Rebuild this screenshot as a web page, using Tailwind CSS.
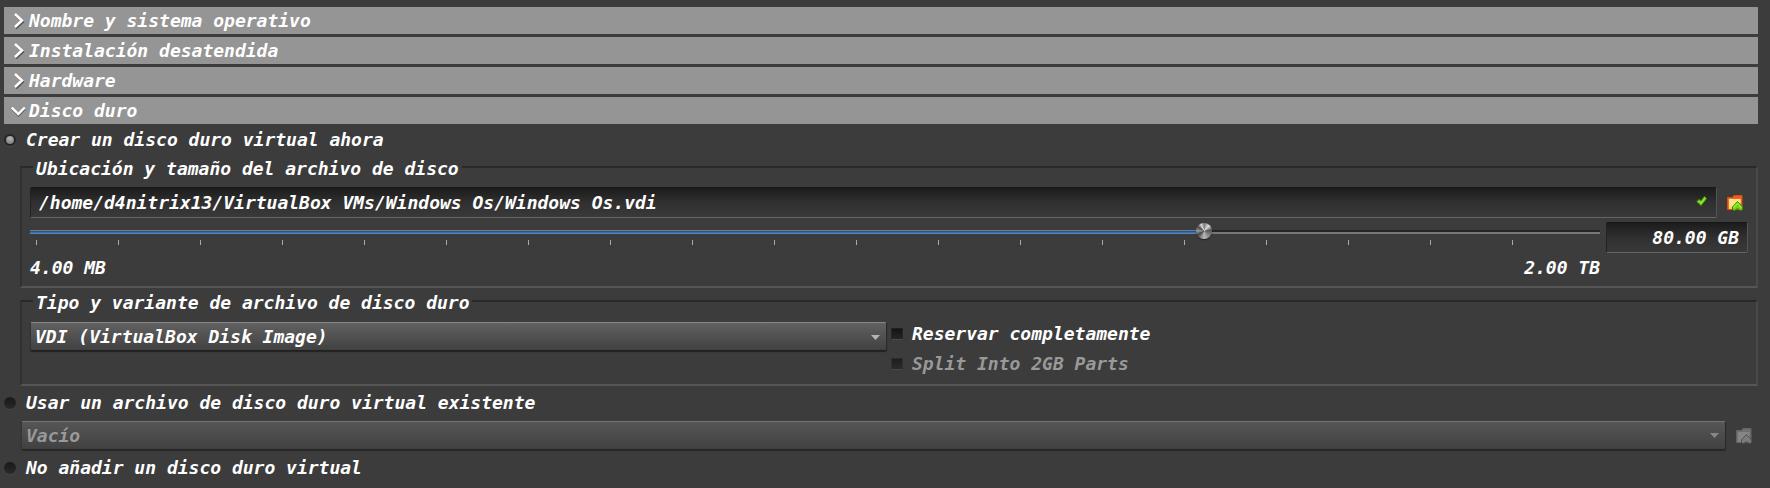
<!DOCTYPE html>
<html lang="es">
<head>
<meta charset="utf-8">
<meta name="viewport" content="width=device-width, initial-scale=1">
<title>Crear máquina virtual</title>
<script src="https://cdn.jsdelivr.net/npm/@tailwindcss/browser@4"></script>
</head>
<body class="min-h-screen bg-[#3c3c3c] pt-[7px] pr-3 pl-1 font-['DejaVu_Sans_Mono',monospace] text-[18px] leading-6 font-bold text-white italic">
<main>
  <nav class="flex flex-col gap-[3px]" aria-label="Secciones">
    <button type="button" aria-expanded="false" class="flex h-[27px] w-full items-center bg-[#959595] pl-[7px] text-left">
      <svg class="mr-[2px] h-4 w-4 shrink-0" viewBox="0 0 16 16" fill="none" aria-hidden="true"><path d="M5 2.5 12 9l-7 6.5" stroke="#555" stroke-width="2"/><path d="M4 1 11 7.5l-7 6.5" stroke="#fff" stroke-width="2.400"/></svg>Nombre y sistema operativo
    </button>
    <button type="button" aria-expanded="false" class="flex h-[27px] w-full items-center bg-[#959595] pl-[7px] text-left">
      <svg class="mr-[2px] h-4 w-4 shrink-0" viewBox="0 0 16 16" fill="none" aria-hidden="true"><path d="M5 2.5 12 9l-7 6.5" stroke="#555" stroke-width="2"/><path d="M4 1 11 7.5l-7 6.5" stroke="#fff" stroke-width="2.400"/></svg>Instalación desatendida
    </button>
    <button type="button" aria-expanded="false" class="flex h-[27px] w-full items-center bg-[#959595] pl-[7px] text-left">
      <svg class="mr-[2px] h-4 w-4 shrink-0" viewBox="0 0 16 16" fill="none" aria-hidden="true"><path d="M5 2.5 12 9l-7 6.5" stroke="#555" stroke-width="2"/><path d="M4 1 11 7.5l-7 6.5" stroke="#fff" stroke-width="2.400"/></svg>Hardware
    </button>
    <button type="button" aria-expanded="true" class="flex h-[27px] w-full items-center bg-[#959595] pl-[7px] text-left">
      <svg class="mr-[2px] h-4 w-4 shrink-0" viewBox="0 0 16 16" fill="none" aria-hidden="true"><path d="m1 5.500 6.500 7L14 5.500" stroke="#555" stroke-width="2"/><path d="m.8 4.500 6.500 6.500L13.800 4.500" stroke="#fff" stroke-width="2.400"/></svg>Disco duro
    </button>
  </nav>

  <label class="mt-px flex h-[30px] items-center gap-[10px]">
    <input type="radio" name="disk" checked class="h-3 w-3 shrink-0 appearance-none rounded-full border-2 border-[#252525] bg-[radial-gradient(circle_at_50%_30%,#b8b8b8,#6c6c6c)] shadow-[0_1px_0_#4a4a4a]">Crear un disco duro virtual ahora
  </label>

  <fieldset class="ml-4 border-2 border-t-[#292929] border-r-[#4a4a4a] border-b-[#565656] border-l-[#323232] pr-2 pb-1 pl-2">
    <legend class="ml-[3px] flex h-6 items-center px-[3px] pt-1">Ubicación y tamaño del archivo de disco</legend>
    <div class="flex items-center gap-[10px] pt-2">
      <div class="relative flex-1">
        <input type="text" aria-label="Ubicación" value="/home/d4nitrix13/VirtualBox VMs/Windows Os/Windows Os.vdi" class="block h-[31px] w-full rounded-xs border border-t-[#171717] border-r-[#545454] border-b-[#666] border-l-[#222] bg-linear-to-b from-[#1c1c1c] via-[#303030] to-[#393939] pr-8 pl-2">
        <svg class="absolute top-2 right-[9px] h-3 w-3" viewBox="0 0 12 12" aria-hidden="true"><path d="M1 6.500 3 4.500 5 6 8.500 1.500 10.500 3.500 5 10.500Z" fill="#73d916" stroke="#4e9a06" stroke-width="1"/><path d="m2.500 6.300 2.500 2L9 3.200" fill="none" stroke="#8ae234" stroke-width="1.600"/></svg>
      </div>
      <button type="button" aria-label="Elegir archivo" class="mr-[5px] h-4 w-4 shrink-0">
        <svg class="h-4 w-4" viewBox="0 0 16 16" aria-hidden="true"><path d="M.5 2.500h5l1.500-2h8v14H.5Z" fill="#ee6a20" stroke="#d84b13"/><path d="M5.500 3 7 1h7.500v2Z" fill="#f05a1c"/><path d="M2 4h11.500v10H2Z" fill="#fdd068"/><path d="M2 4h11.500v4L2 12Z" fill="#ffe28a"/><path d="m10.500 6.500 5 5.500v2.500l-2 1-3-2-3 2-2-1V12Z" fill="#70d415" stroke="#3f8a05"/><path d="m6.500 12.800 4-4.300 4 4.300" fill="none" stroke="#8ef03a" stroke-width="1.500"/></svg>
      </button>
    </div>
    <div class="flex items-start gap-[6px] pt-[4px]">
      <div class="flex-1">
        <input type="range" aria-label="Tamaño" min="0" max="1000" value="750" class="block h-[18px] w-full appearance-none bg-[linear-gradient(#6480a0_25%,#38506c_25%_50%,#3a6ea8_50%_75%,#4d86c0_75%),linear-gradient(#252525_50%,#777_50%)] bg-[length:74.8%_4px,100%_4px] bg-[position:left_8px,left_8px] bg-no-repeat [&::-webkit-slider-thumb]:h-4 [&::-webkit-slider-thumb]:w-4 [&::-webkit-slider-thumb]:appearance-none [&::-webkit-slider-thumb]:rounded-full [&::-webkit-slider-thumb]:bg-[conic-gradient(#777,#ddd_12%,#555_23%,#888_37%,#bbb_50%,#444_66%,#999_75%,#4c4c4c_85%,#ddd_94%,#777)] [&::-webkit-slider-thumb]:shadow-[0_1px_1px_#222]">
        <div class="flex h-[5px] justify-between pr-[87px] pl-[6px]" aria-hidden="true">
          <i class="w-px bg-[#a8a8a8]"></i><i class="w-px bg-[#a8a8a8]"></i><i class="w-px bg-[#a8a8a8]"></i><i class="w-px bg-[#a8a8a8]"></i><i class="w-px bg-[#a8a8a8]"></i><i class="w-px bg-[#a8a8a8]"></i><i class="w-px bg-[#a8a8a8]"></i><i class="w-px bg-[#a8a8a8]"></i><i class="w-px bg-[#a8a8a8]"></i><i class="w-px bg-[#a8a8a8]"></i><i class="w-px bg-[#a8a8a8]"></i><i class="w-px bg-[#a8a8a8]"></i><i class="w-px bg-[#a8a8a8]"></i><i class="w-px bg-[#a8a8a8]"></i><i class="w-px bg-[#a8a8a8]"></i><i class="w-px bg-[#a8a8a8]"></i><i class="w-px bg-[#a8a8a8]"></i><i class="w-px bg-[#a8a8a8]"></i><i class="w-px bg-[#a8a8a8]"></i>
        </div>
        <div class="mt-[9px] flex h-7 items-center justify-between"><span>4.00 MB</span><span>2.00 TB</span></div>
      </div>
      <input type="text" aria-label="Tamaño del disco" value="80.00 GB" class="block h-[31px] w-[142px] rounded-xs border border-t-[#171717] border-r-[#545454] border-b-[#666] border-l-[#222] bg-linear-to-b from-[#1c1c1c] via-[#303030] to-[#393939] px-2 text-right">
    </div>
  </fieldset>

  <fieldset class="mt-px ml-4 border-2 border-t-[#292929] border-r-[#4a4a4a] border-b-[#565656] border-l-[#323232] pr-2 pb-[5px] pl-2">
    <legend class="ml-[3px] flex h-6 items-center px-[3px] pt-1">Tipo y variante de archivo de disco duro</legend>
    <div class="grid grid-cols-2 gap-1 pt-[6px]">
      <div class="relative pt-[3px]">
        <select aria-label="Tipo de archivo" class="block h-[29px] w-full appearance-none rounded-xs border border-t-[#888] border-r-[#292929] border-b-[#202020] border-l-[#333] bg-linear-to-b from-[#616161] to-[#414141] pl-1 shadow-[0_1px_1px_#222]">
          <option>VDI (VirtualBox Disk Image)</option>
        </select>
        <svg class="pointer-events-none absolute top-4 right-[7px] h-[5px] w-[9px]" viewBox="0 0 9 5" aria-hidden="true"><path d="M0 0h9L4.500 5Z" fill="#b5b5b5"/></svg>
      </div>
      <div>
        <label class="flex h-[30px] items-center gap-[9px]"><input type="checkbox" class="h-3 w-3 appearance-none border border-t-[#202020] border-r-[#262626] border-b-[#4b4b4b] border-l-[#262626] bg-linear-to-b from-[#141414] to-[#252525]">Reservar completamente</label>
        <label class="flex h-[30px] items-center gap-[9px] text-[#999]"><input type="checkbox" disabled class="h-3 w-3 appearance-none border border-t-[#2b2b2b] border-r-[#303030] border-b-[#484848] border-l-[#303030] bg-linear-to-b from-[#1e1e1e] to-[#2b2b2b]">Split Into 2GB Parts</label>
      </div>
    </div>
  </fieldset>

  <label class="mt-[2px] flex h-[30px] items-center gap-[10px]">
    <input type="radio" name="disk" class="h-3 w-3 shrink-0 appearance-none rounded-full bg-linear-to-b from-[#191919] to-[#292929] shadow-[0_1px_0_#484848]">Usar un archivo de disco duro virtual existente
  </label>
  <div class="mt-[3px] flex items-center gap-[10px] pr-[6px] pl-[17px]">
    <div class="relative flex-1">
      <select disabled aria-label="Archivo existente" class="block h-[29px] w-full appearance-none rounded-xs border border-t-[#747474] border-r-[#292929] border-b-[#252525] border-l-[#353535] bg-linear-to-b from-[#565656] to-[#414141] pl-1 text-[#999] opacity-100 shadow-[0_1px_1px_#2a2a2a]">
        <option>Vacío</option>
      </select>
      <svg class="pointer-events-none absolute top-3 right-[7px] h-[5px] w-[9px]" viewBox="0 0 9 5" aria-hidden="true"><path d="M0 0h9L4.500 5Z" fill="#888"/></svg>
    </div>
    <button type="button" disabled aria-label="Elegir archivo existente" class="h-4 w-4 shrink-0">
      <svg class="h-4 w-4" viewBox="0 0 16 16" aria-hidden="true"><path d="M.5 2.500h5l1.500-2h8v14H.5Z" fill="#707070" stroke="#646464"/><path d="M2 4h11.500v10H2Z" fill="#858585"/><path d="m10.500 6.500 5 5.500v2.500l-2 1-3-2-3 2-2-1V12Z" fill="#7c7c7c" stroke="#505050"/></svg>
    </button>
  </div>
  <label class="mt-[3px] flex h-[30px] items-center gap-[10px]">
    <input type="radio" name="disk" class="h-3 w-3 shrink-0 appearance-none rounded-full bg-linear-to-b from-[#191919] to-[#292929] shadow-[0_1px_0_#484848]">No añadir un disco duro virtual
  </label>
</main>
</body>
</html>
